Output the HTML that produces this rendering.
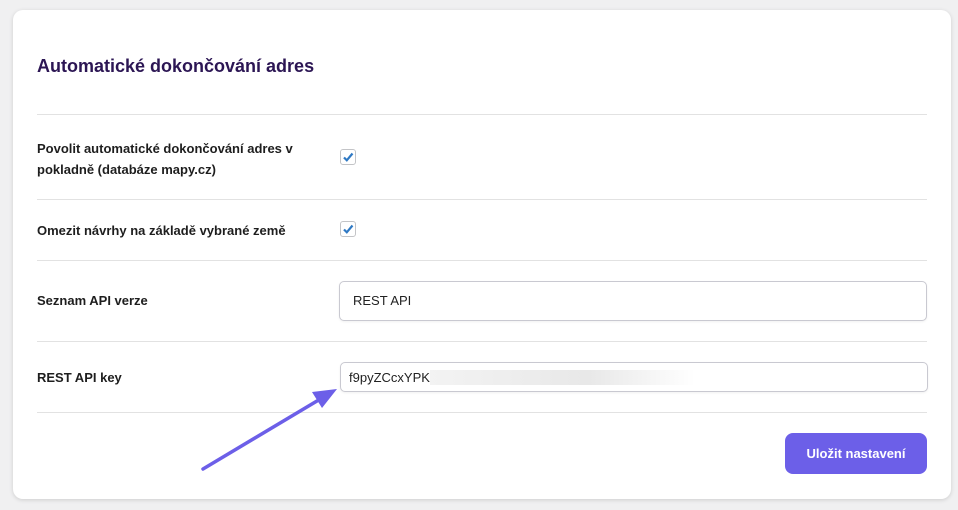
<!DOCTYPE html>
<html><head><meta charset="utf-8"><style>
body{margin:0;width:958px;height:510px;background:#f0f0f1;font-family:"Liberation Sans",sans-serif;position:relative;overflow:hidden}
.card{position:absolute;left:13px;top:10px;width:938px;height:489px;background:#fff;border-radius:10px;box-shadow:0 1px 4px rgba(0,0,0,.15)}
.t{position:absolute;left:37px;top:56px;font-size:18px;font-weight:bold;color:#2c1654}
.hr{position:absolute;left:37px;width:890px;height:1px;background:#e2e2e2}
.l{position:absolute;left:37px;font-size:13px;font-weight:bold;color:#1e1e1e;line-height:21px}
.cb{position:absolute;left:340px;width:14px;height:14px;border:1px solid #c3c4c7;border-radius:3px;background:#fff}
.in{position:absolute;border:1px solid #c9c9d1;border-radius:5px;background:#fff;font-size:13px;color:#222;box-sizing:border-box;box-shadow:0 1px 2px rgba(0,0,0,.06)}
.btn{position:absolute;left:785px;top:433px;width:142px;height:41px;background:#6c5fe8;border-radius:8px;color:#fff;font-size:13px;font-weight:bold;text-align:center;line-height:41px}
</style></head><body>
<div class="card"></div>
<div class="t">Automatické dokončování adres</div>
<div class="hr" style="top:114px"></div>
<div class="hr" style="top:199px"></div>
<div class="hr" style="top:260px"></div>
<div class="hr" style="top:341px"></div>
<div class="hr" style="top:412px"></div>
<div class="l" style="top:138px">Povolit automatické dokončování adres v<br>pokladně (databáze mapy.cz)</div>
<div class="l" style="top:220px">Omezit návrhy na základě vybrané země</div>
<div class="l" style="top:290px">Seznam API verze</div>
<div class="l" style="top:367px">REST API key</div>
<div class="cb" style="top:149px"><svg width="14" height="14" viewBox="0 0 14 14"><path d="M3 7.5l2.8 2.8L11.5 3.5" stroke="#2f79c4" stroke-width="2.2" fill="none"/></svg></div>
<div class="cb" style="top:221px"><svg width="14" height="14" viewBox="0 0 14 14"><path d="M3 7.5l2.8 2.8L11.5 3.5" stroke="#2f79c4" stroke-width="2.2" fill="none"/></svg></div>
<div class="in" style="left:339px;top:281px;width:588px;height:40px;padding:11px 0 0 13px">REST API</div>
<div class="in" style="left:340px;top:362px;width:588px;height:30px;padding:7px 0 0 8px">f9pyZCcxYPK<span style="display:inline-block;width:265px;height:15px;vertical-align:-3px;background:linear-gradient(90deg,#f3f3f3,#e8e8e8 60%,#fff)"></span></div>
<div class="btn">Uložit nastavení</div>
<svg style="position:absolute;left:0;top:0" width="958" height="510"><line x1="203" y1="469" x2="322" y2="398" stroke="#6c5fe8" stroke-width="3.5" stroke-linecap="round"/><path d="M337 389L312 392L322 408Z" fill="#6c5fe8"/></svg>
</body></html>
